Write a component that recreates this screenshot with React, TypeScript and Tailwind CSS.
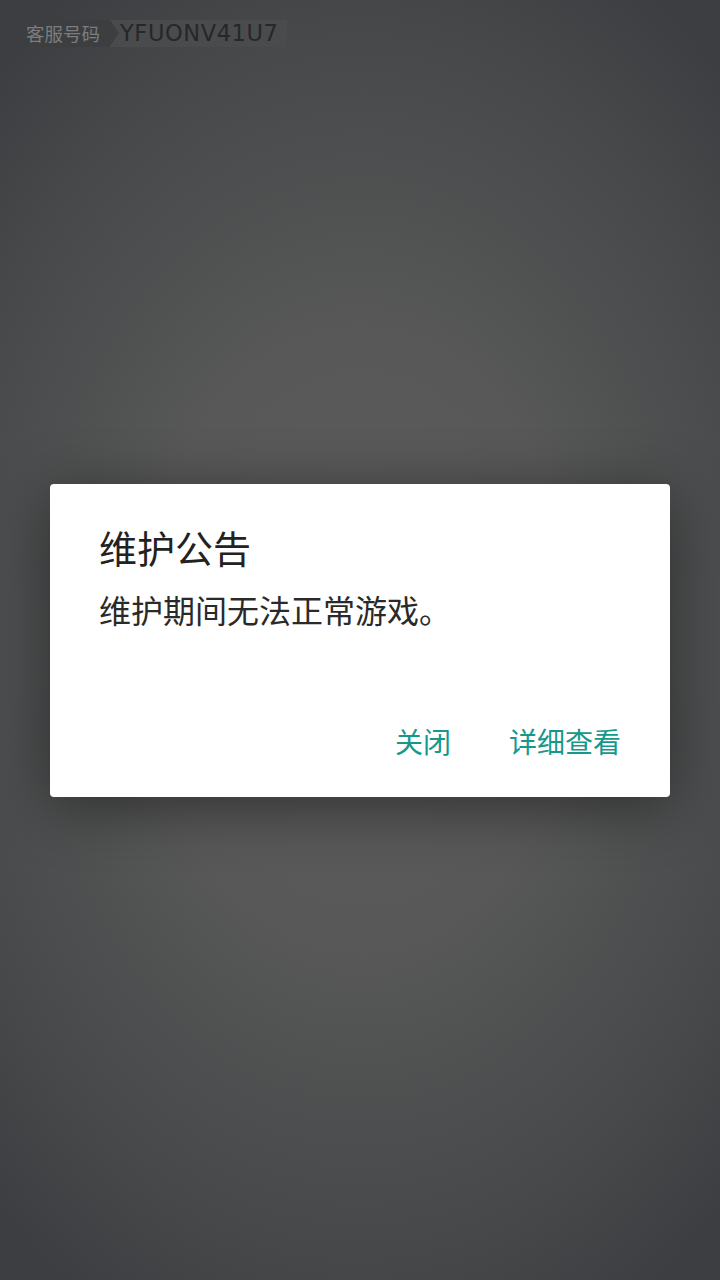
export default function App() {
  return (
    <div
      className="relative w-[720px] h-[1280px] overflow-hidden bg-[radial-gradient(ellipse_75%_60%_at_50%_50%,#5b5c5b_0%,#575857_40%,#46484a_80%,#3c3e41_100%)]"
      style={{ fontFamily: '"Noto Sans CJK SC", "Noto Sans", sans-serif' }}
    >
      <div className="absolute left-[25px] top-[20px] flex h-[27px] items-stretch">
        <div className="flex items-center bg-[#3d3e40] pl-[1px] pr-[10px] text-[18.5px] leading-none text-[#7b7c7e]">
          客服号码
        </div>
        <div className="relative flex items-center bg-[#4a4b4d] pl-[10px] pr-[8px]">
          <div className="absolute left-0 top-0 h-0 w-0 border-y-[13.5px] border-l-[9px] border-y-transparent border-l-[#3d3e40]" />
          <span
            className="text-[22.5px] leading-none tracking-[0.6px] text-[#262729]"
            style={{ fontFamily: '"DejaVu Sans", sans-serif' }}
          >
            YFUONV41U7
          </span>
        </div>
      </div>

      <div className="flex h-full w-full items-center justify-center">
        <div className="flex h-[313px] w-[620px] flex-col rounded-[4px] bg-white shadow-[0_10px_60px_rgba(0,0,0,0.45)]">
          <div className="pl-[49px] pt-[38px] text-[38px] leading-[50px] text-[#222222]">
            维护公告
          </div>
          <div className="mt-[16px] pl-[49px] text-[32px] leading-[42px] text-[#2a2a2a]">
            维护期间无法正常游戏。
          </div>
          <div className="mt-auto mb-[38px] flex justify-end pr-[49px] text-[28px] leading-[36px] text-[#17988a]">
            <span className="mr-[58px]">关闭</span>
            <span>详细查看</span>
          </div>
        </div>
      </div>
    </div>
  );
}
